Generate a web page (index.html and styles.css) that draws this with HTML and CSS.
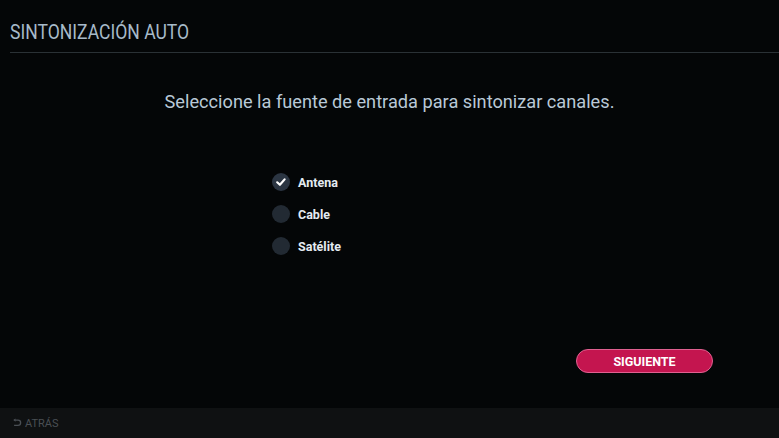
FILE: index.html
```html
<!DOCTYPE html>
<html>
<head>
<meta charset="utf-8">
<link rel="stylesheet" href="styles.css">
</head>
<body>
<div class="screen">
  <header class="header">
    <h1 class="title"><span class="title-text">SINTONIZACIÓN AUTO</span></h1>
  </header>
  <main class="main">
    <p class="prompt">Seleccione la fuente de entrada para sintonizar canales.</p>
    <ul class="options">
      <li class="option">
        <span class="radio checked">
          <svg viewBox="0 0 18 18" width="18" height="18"><path d="M5.2 9.3 L7.9 11.8 L12.6 6.4" fill="none" stroke="#fff" stroke-width="2.2" stroke-linecap="round" stroke-linejoin="round"/></svg>
        </span>
        <span class="label">Antena</span>
      </li>
      <li class="option">
        <span class="radio"></span>
        <span class="label">Cable</span>
      </li>
      <li class="option">
        <span class="radio"></span>
        <span class="label">Satélite</span>
      </li>
    </ul>
    <div class="actions">
      <button class="next">SIGUIENTE</button>
    </div>
  </main>
  <footer class="footer">
    <span class="back">
      <svg viewBox="0 0 12 12" width="10" height="10"><path d="M3 2.5 H7.2 A3 3 0 0 1 7.2 8.8 H2.5" fill="none" stroke="#4a4f54" stroke-width="1.6"/><path d="M1.5 2.5 L4.2 0.6 L4.2 4.4 Z" fill="#4a4f54"/></svg>
      ATRÁS
    </span>
  </footer>
</div>
</body>
</html>
```
FILE: styles.css
```css
html, body {
  margin: 0;
  padding: 0;
  background: #040607;
}
.screen {
  width: 779px;
  height: 438px;
  display: flex;
  flex-direction: column;
  font-family: Roboto, "Liberation Sans", sans-serif;
  background: #040607;
  overflow: hidden;
}
.header {
  padding: 21px 0 0 10px;
}
.title {
  margin: 0;
  font-size: 19.5px;
  font-weight: 400;
  color: #a7bac9;
  line-height: 24px;
  padding-bottom: 7px;
  border-bottom: 1px solid #2a3135;
}
.title-text {
  display: inline-block;
  transform: scaleX(0.9);
  transform-origin: left center;
}
.main {
  flex: 1;
  display: flex;
  flex-direction: column;
}
.prompt {
  margin: 35px 0 0 0;
  text-align: center;
  font-size: 18.2px;
  color: #b9c9d7;
  line-height: 28px;
}
.options {
  list-style: none;
  margin: 57px 0 0 272px;
  padding: 0;
  display: flex;
  flex-direction: column;
  gap: 14px;
}
.option {
  display: flex;
  align-items: center;
  height: 18px;
}
.radio {
  width: 18px;
  height: 18px;
  border-radius: 50%;
  background: #222a33;
  display: inline-flex;
  align-items: center;
  justify-content: center;
  flex-shrink: 0;
}
.radio.checked {
  background: #2b3542;
}
.label {
  margin-left: 8px;
  font-size: 12.5px;
  font-weight: 700;
  color: #e4ebf2;
}
.actions {
  margin-top: 94px;
  padding-left: 576px;
}
.next {
  width: 137px;
  height: 24px;
  border: 1px solid #e06090;
  border-radius: 12px;
  background: #c4154f;
  color: #fff;
  font-family: Roboto, "Liberation Sans", sans-serif;
  font-size: 12.5px;
  font-weight: 700;
  padding: 0;
  cursor: pointer;
}
.footer {
  height: 30px;
  background: #0f1112;
  display: flex;
  align-items: center;
  padding-left: 12px;
}
.back {
  display: flex;
  align-items: center;
  gap: 3px;
  font-size: 11px;
  color: #4a4f54;
}
```
